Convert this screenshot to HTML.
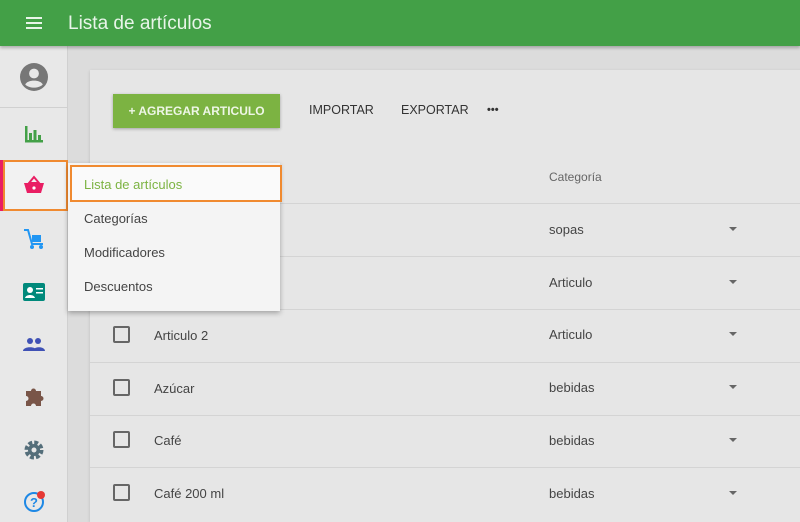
<!DOCTYPE html>
<html style="overflow:hidden;width:800px;height:522px"><head><meta charset="utf-8"><style>
*{margin:0;padding:0;box-sizing:border-box}
body{width:800px;height:522px;overflow:hidden;background:#dcdcdc;font-family:"Liberation Sans",sans-serif;position:relative}
.hdr{position:absolute;left:0;top:0;width:800px;height:46px;background:#43a047;box-shadow:0 2px 3px rgba(0,0,0,.25);z-index:5}
.hdr .t{position:absolute;left:68px;top:13px;color:#e8f5e9;font-size:19px}
.side{position:absolute;left:0;top:46px;width:68px;height:476px;background:#e8e8e8;border-right:1px solid #d0d0d0}
.ic{position:absolute;left:22px;width:24px;height:24px}
.card{position:absolute;left:90px;top:70px;width:720px;height:452px;background:#e6e6e6;box-shadow:0 1px 3px rgba(0,0,0,.15)}
.btn{position:absolute;left:113px;top:94px;width:167px;height:34px;background:#7cb342;color:#eef6e6;font-size:12px;font-weight:bold;text-align:center;line-height:34px;box-shadow:0 1px 3px rgba(0,0,0,.3)}
.tb{position:absolute;top:103px;font-size:12.5px;color:#333}
.row{position:absolute;left:90px;width:710px;border-top:1px solid #d4d4d4;height:53px}
.txt{position:absolute;font-size:13px;color:#444}
.cb{position:absolute;left:113px;width:17px;height:17px;border:2px solid #666;border-radius:2px}
.arr{position:absolute;left:729px;width:0;height:0;border-left:4px solid transparent;border-right:4px solid transparent;border-top:4px solid #666}
.menu{position:absolute;left:68px;top:163px;width:212px;height:148px;background:#f4f4f4;box-shadow:0 2px 5px rgba(0,0,0,.3)}
.menu div{position:absolute;left:16px;font-size:13px;color:#444}
</style></head><body>
<div class="hdr">
<svg style="position:absolute;left:26px;top:16px" width="16" height="14"><rect y="1" width="16" height="2" fill="#e8f5e9"/><rect y="6" width="16" height="2" fill="#e8f5e9"/><rect y="11" width="16" height="2" fill="#e8f5e9"/></svg>
<div class="t">Lista de artículos</div></div>
<div class="side">
<div style="position:absolute;left:0;top:61px;width:68px;border-top:1px solid #d0d0d0"></div>
</div>
<svg class="ic" style="left:20px;top:63px;width:28px;height:28px" viewBox="0 0 24 24"><circle cx="12" cy="12" r="12" fill="#777"/><circle cx="12" cy="9" r="4.2" fill="#e8e8e8"/><path d="M4.5 18.5c2-4.5 13-4.5 15 0c-4 3.5-11 3.5-15 0z" fill="#e8e8e8"/></svg>
<svg class="ic" style="top:122px" viewBox="0 0 24 24"><path d="M3 4h2.5v14H21v2.5H3z M7 11h3v7H7z M11.5 8h3v10h-3z M16 13h3v5h-3z" fill="#43a047"/></svg>
<div style="position:absolute;left:0;top:160px;width:4px;height:51px;background:#e91e63"></div>
<div style="position:absolute;left:3px;top:160px;width:65px;height:51px;background:#f2f2f2;border:2px solid #f08a30"></div>
<svg class="ic" style="top:174px" viewBox="0 0 24 24"><path d="M12 3l-5 6h10z" fill="none" stroke="#e91e63" stroke-width="2"/><path d="M2 9h20l-3 10H5z" fill="#e91e63"/><circle cx="12" cy="14" r="1.6" fill="#fff"/></svg>
<svg class="ic" style="top:227px" viewBox="0 0 24 24"><path d="M2 3h4l4 14h11" fill="none" stroke="#2196f3" stroke-width="2"/><rect x="10" y="8" width="9" height="7" fill="#2196f3"/><circle cx="10" cy="20" r="2" fill="#2196f3"/><circle cx="19" cy="20" r="2" fill="#2196f3"/></svg>
<svg class="ic" style="top:280px" viewBox="0 0 24 24"><rect x="1" y="3" width="22" height="18" rx="2" fill="#00897b"/><circle cx="8" cy="10" r="3" fill="#fff"/><path d="M3 18c1-4 9-4 10 0z" fill="#fff"/><rect x="14" y="8" width="7" height="1.5" fill="#fff"/><rect x="14" y="12" width="7" height="1.5" fill="#fff"/></svg>
<svg class="ic" style="top:333px" viewBox="0 0 24 24"><circle cx="8" cy="8" r="3" fill="#3f51b5"/><circle cx="16" cy="8" r="3" fill="#3f51b5"/><path d="M1 18c0-5 14-5 14 0z M11 18c0-5 12-5 12 0z" fill="#3f51b5"/></svg>
<svg class="ic" style="top:385px" viewBox="0 0 24 24"><path d="M4 6h5a2.5 2.5 0 015 0h5v5a2.5 2.5 0 010 5v5h-5a2.5 2.5 0 00-5 0H4v-5a2.5 2.5 0 000-5z" fill="#795548"/></svg>
<svg class="ic" style="top:438px" viewBox="0 0 24 24"><circle cx="12" cy="12" r="7" fill="none" stroke="#546e7a" stroke-width="5" stroke-dasharray="3.6 1.9"/><circle cx="12" cy="12" r="6" fill="#546e7a"/><circle cx="12" cy="12" r="2.5" fill="#e8e8e8"/></svg>
<svg class="ic" style="top:490px" viewBox="0 0 24 24"><circle cx="12" cy="12" r="9" fill="none" stroke="#1e88e5" stroke-width="2"/><text x="12" y="17" font-size="13" font-weight="bold" text-anchor="middle" fill="#1e88e5" font-family="Liberation Sans">?</text><circle cx="19" cy="5" r="4" fill="#e53935"/></svg>
<div class="card"></div>
<div class="btn">+ AGREGAR ARTICULO</div>
<div class="tb" style="left:309px">IMPORTAR</div>
<div class="tb" style="left:401px">EXPORTAR</div>
<div class="tb" style="left:487px;top:104px;font-weight:bold;font-size:11px;letter-spacing:0px">•••</div>
<div class="txt" style="left:549px;top:170px;font-size:12px;color:#666">Categoría</div>
<div class="row" style="top:203px"></div><div class="txt" style="left:549px;top:222px">sopas</div><div class="arr" style="top:227px"></div>
<div class="row" style="top:256px"></div><div class="txt" style="left:549px;top:275px">Articulo</div><div class="arr" style="top:280px"></div>
<div class="row" style="top:309px"></div><div class="cb" style="top:326px"></div><div class="txt" style="left:154px;top:328px">Articulo 2</div><div class="txt" style="left:549px;top:327px">Articulo</div><div class="arr" style="top:332px"></div>
<div class="row" style="top:362px"></div><div class="cb" style="top:379px"></div><div class="txt" style="left:154px;top:381px">Azúcar</div><div class="txt" style="left:549px;top:380px">bebidas</div><div class="arr" style="top:385px"></div>
<div class="row" style="top:415px"></div><div class="cb" style="top:431px"></div><div class="txt" style="left:154px;top:433px">Café</div><div class="txt" style="left:549px;top:433px">bebidas</div><div class="arr" style="top:438px"></div>
<div class="row" style="top:467px"></div><div class="cb" style="top:484px"></div><div class="txt" style="left:154px;top:486px">Café 200 ml</div><div class="txt" style="left:549px;top:486px">bebidas</div><div class="arr" style="top:491px"></div>
<div class="menu">
<div style="left:2px;top:2px;width:212px;height:37px;background:#fafafa;border:2px solid #f08a30"></div>
<div style="top:14px;color:#7cb342">Lista de artículos</div>
<div style="top:48px">Categorías</div>
<div style="top:82px">Modificadores</div>
<div style="top:116px">Descuentos</div>
</div>
</body></html>
